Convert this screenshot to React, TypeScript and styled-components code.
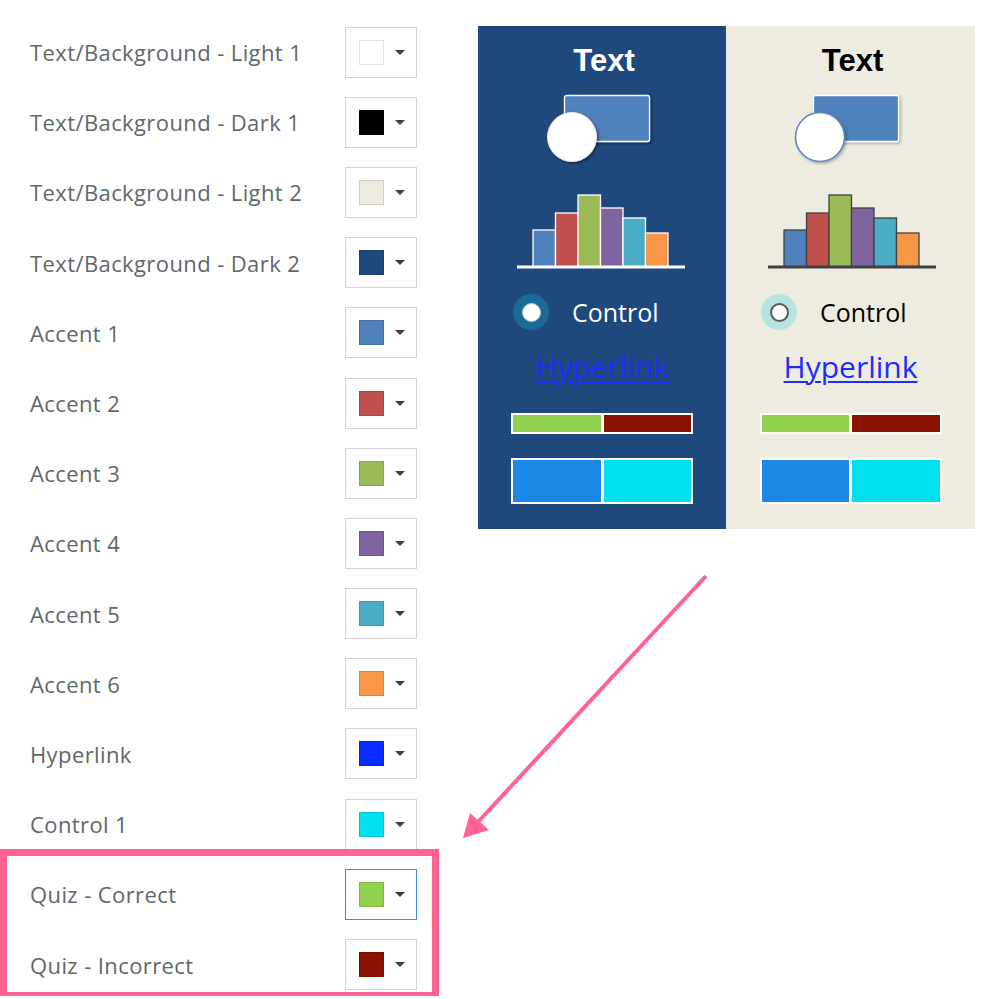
import React from "react";
import styled, { createGlobalStyle } from "styled-components";

const GlobalStyle = createGlobalStyle`
  html, body { margin: 0; padding: 0; background: #ffffff; }
  body { font-family: "Open Sans", "Noto Sans", sans-serif; }
`;

const PINK = "#ff6392";

const Page = styled.div`
  position: relative;
  width: 990px;
  height: 999px;
  overflow: hidden;
  display: flex;
  align-items: flex-start;
`;

const LeftColumn = styled.div`
  width: 448px;
  padding: 17px 0 0 30px;
  display: flex;
  flex-direction: column;
  align-items: flex-start;
`;

const Row = styled.div`
  height: 70.2px;
  width: 387px;
  display: flex;
  align-items: center;
`;

const Label = styled.span`
  flex: 1;
  font-size: 22px;
  letter-spacing: 0.4px;
  color: #5e686a;
  white-space: nowrap;
`;

const SwatchButton = styled.div<{ $focused?: boolean }>`
  box-sizing: border-box;
  width: 72px;
  height: 51px;
  border: ${(p) => (p.$focused ? "1.5px solid #3b8fe0" : "1px solid #d4d4d4")};
  background: #ffffff;
  display: flex;
  align-items: center;
  padding-left: 13px;
  gap: 11px;
`;

const Swatch = styled.div<{ $color: string }>`
  box-sizing: border-box;
  width: 25px;
  height: 25px;
  background: ${(p) => p.$color};
  border: 1px solid ${(p) => (p.$color.toLowerCase() === "#ffffff" ? "#e2e2e2" : "rgba(0,0,0,0.12)")};
`;

const Caret = styled.div`
  width: 0;
  height: 0;
  border-left: 5px solid transparent;
  border-right: 5px solid transparent;
  border-top: 5px solid #3f3f3f;
`;

const Highlight = styled.div`
  position: relative;
  width: 387px;
  display: flex;
  flex-direction: column;
  &::before {
    content: "";
    position: absolute;
    top: -10px;
    left: -30px;
    right: -22px;
    bottom: 4px;
    border: 7px solid ${PINK};
    border-bottom-width: 4px;
    pointer-events: none;
  }
`;

const Preview = styled.div`
  margin-top: 26px;
  height: 503px;
  display: flex;
`;

const ThemeColumn = styled.div<{ $dark?: boolean }>`
  width: ${(p) => (p.$dark ? 248 : 249)}px;
  height: 100%;
  box-sizing: border-box;
  background: ${(p) => (p.$dark ? "#1f497d" : "#eeece1")};
  color: ${(p) => (p.$dark ? "#ffffff" : "#000000")};
  display: flex;
  flex-direction: column;
  align-items: center;
  padding-top: 17px;
`;

const Title = styled.div`
  font-family: "Liberation Sans", Arial, sans-serif;
  font-weight: 700;
  font-size: 31px;
  line-height: 36px;
  height: 36px;
  padding-left: 4px;
`;

const Graphic = styled.svg`
  display: block;
  flex: none;
`;

const RadioRow = styled.div`
  align-self: flex-start;
  margin-left: 35px;
  margin-top: 23px;
  height: 36px;
  display: flex;
  align-items: center;
  gap: 23px;
`;

const RadioRing = styled.div<{ $dark?: boolean }>`
  width: 36px;
  height: 36px;
  border-radius: 50%;
  background: ${(p) => (p.$dark ? "#1b6a98" : "#b6e4e2")};
  display: flex;
  align-items: center;
  justify-content: center;
`;

const RadioDot = styled.div<{ $dark?: boolean }>`
  box-sizing: border-box;
  width: 19px;
  height: 19px;
  border-radius: 50%;
  background: #ffffff;
  border: ${(p) => (p.$dark ? "1px solid #c8c8c8" : "2px solid #5a5a5a")};
`;

const ControlText = styled.span`
  font-size: 25px;
  line-height: 36px;
`;

const Link = styled.a`
  margin-top: 17px;
  font-size: 30px;
  line-height: 40px;
  height: 40px;
  color: #1f2cff;
  text-decoration: underline;
  text-decoration-thickness: 1.5px;
  text-underline-offset: 3px;
`;

const SplitBar = styled.div<{ $h: number; $mt: number }>`
  margin-top: ${(p) => p.$mt}px;
  box-sizing: border-box;
  width: 182px;
  height: ${(p) => p.$h}px;
  background: #ffffff;
  padding: 2px;
  display: flex;
  gap: 3px;
`;

const BarHalf = styled.div<{ $color: string }>`
  flex: 1;
  background: ${(p) => p.$color};
`;

const ArrowLayer = styled.svg`
  position: absolute;
  left: 0;
  top: 0;
  pointer-events: none;
`;

const rows: { label: string; color: string }[] = [
  { label: "Text/Background - Light 1", color: "#ffffff" },
  { label: "Text/Background - Dark 1", color: "#000000" },
  { label: "Text/Background - Light 2", color: "#eeece1" },
  { label: "Text/Background - Dark 2", color: "#1f497d" },
  { label: "Accent 1", color: "#4f81bd" },
  { label: "Accent 2", color: "#c0504d" },
  { label: "Accent 3", color: "#9bbb59" },
  { label: "Accent 4", color: "#8064a2" },
  { label: "Accent 5", color: "#4bacc6" },
  { label: "Accent 6", color: "#f79646" },
  { label: "Hyperlink", color: "#0a2cff" },
  { label: "Control 1", color: "#00e0f0" },
];

const quizRows = [
  { label: "Quiz - Correct", color: "#92d050", focused: true },
  { label: "Quiz - Incorrect", color: "#8b1200", focused: false },
];

const bars = [
  { color: "#4f81bd", top: 39 },
  { color: "#c0504d", top: 22 },
  { color: "#9bbb59", top: 4 },
  { color: "#8064a2", top: 17 },
  { color: "#4bacc6", top: 27 },
  { color: "#f79646", top: 42 },
];

function ShapeArt({ dark }: { dark: boolean }) {
  const fid = dark ? "sd" : "sl";
  return (
    <Graphic width={248} height={72} style={{ marginTop: 14 }}>
      <defs>
        <filter id={fid} x="-30%" y="-30%" width="160%" height="160%">
          <feDropShadow dx="1.5" dy="1.5" stdDeviation="1.5" floodColor="#000" floodOpacity={dark ? 0.45 : 0.3} />
        </filter>
      </defs>
      <rect x={86.5} y={2.5} width={85} height={46} rx={2} fill="#4f81bd" stroke="#ffffff" strokeWidth={1.3} filter={`url(#${fid})`} />
      <circle cx={dark ? 94 : 93} cy={44} r={24.5} fill="#ffffff" stroke={dark ? "#dfe6ef" : "#5a84c0"} strokeWidth={dark ? 1 : 1.5} filter={`url(#${fid})`} />
    </Graphic>
  );
}

function ChartArt({ dark }: { dark: boolean }) {
  const stroke = dark ? "#ffffff" : "#404040";
  const x0 = dark ? 55 : 57;
  const w = 22.5;
  return (
    <Graphic width={248} height={80} style={{ marginTop: 26 }}>
      {bars.map((b, i) => (
        <rect key={i} x={x0 + i * w} y={b.top} width={w} height={76 - b.top} fill={b.color} stroke={stroke} strokeWidth={1.3} />
      ))}
      <line x1={x0 - 16} x2={x0 + 152} y1={76} y2={76} stroke={stroke} strokeWidth={3} />
    </Graphic>
  );
}

function Column({ dark }: { dark: boolean }) {
  return (
    <ThemeColumn $dark={dark}>
      <Title>Text</Title>
      <ShapeArt dark={dark} />
      <ChartArt dark={dark} />
      <RadioRow>
        <RadioRing $dark={dark}>
          <RadioDot $dark={dark} />
        </RadioRing>
        <ControlText>Control</ControlText>
      </RadioRow>
      <Link href="#">Hyperlink</Link>
      <SplitBar $h={21} $mt={26}>
        <BarHalf $color="#92d050" />
        <BarHalf $color="#8b1200" />
      </SplitBar>
      <SplitBar $h={46} $mt={24}>
        <BarHalf $color="#1b88e6" />
        <BarHalf $color="#00e0f0" />
      </SplitBar>
    </ThemeColumn>
  );
}

export default function App() {
  return (
    <>
      <GlobalStyle />
      <Page>
        <LeftColumn>
          {rows.map((r) => (
            <Row key={r.label}>
              <Label>{r.label}</Label>
              <SwatchButton>
                <Swatch $color={r.color} />
                <Caret />
              </SwatchButton>
            </Row>
          ))}
          <Highlight>
            {quizRows.map((r) => (
              <Row key={r.label}>
                <Label>{r.label}</Label>
                <SwatchButton $focused={r.focused}>
                  <Swatch $color={r.color} />
                  <Caret />
                </SwatchButton>
              </Row>
            ))}
          </Highlight>
        </LeftColumn>
        <Preview>
          <Column dark />
          <Column dark={false} />
        </Preview>
        <ArrowLayer width={990} height={999}>
          <line x1={706} y1={576} x2={478} y2={822} stroke={PINK} strokeWidth={4} />
          <polygon points="463,838 470,813 489,830" fill={PINK} />
        </ArrowLayer>
      </Page>
    </>
  );
}
